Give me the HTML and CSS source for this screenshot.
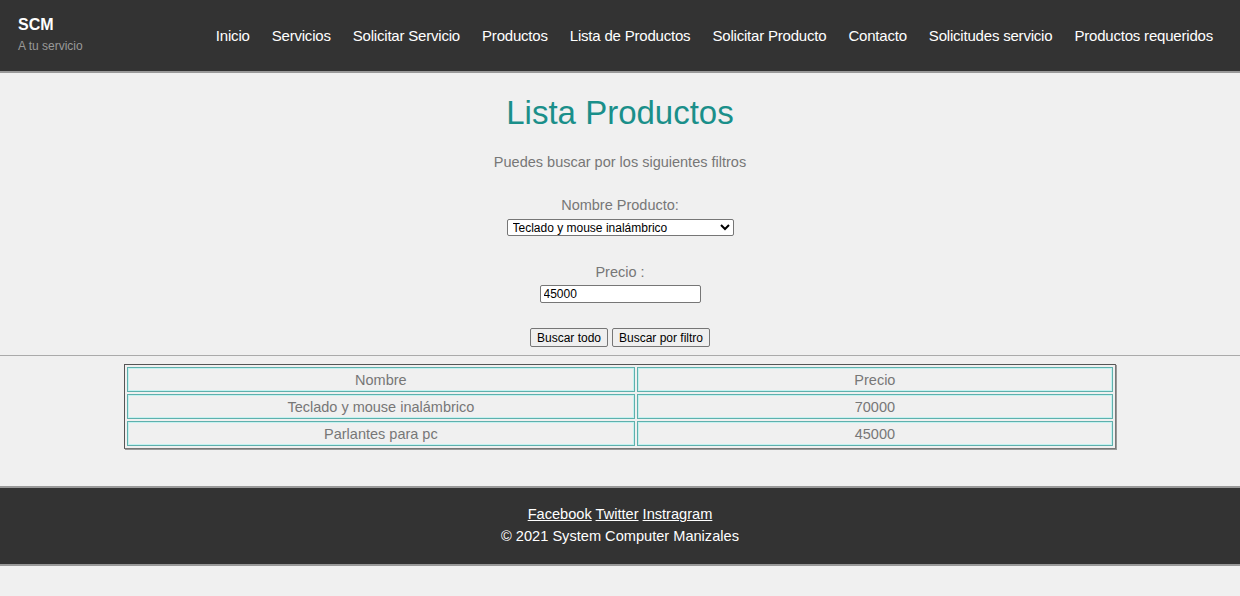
FILE: index.html
```html
<!DOCTYPE html>
<html lang="es">
<head>
<meta charset="utf-8">
<title>Lista Productos</title>
<link rel="stylesheet" href="styles.css">
</head>
<body>
<header class="topbar">
  <div class="brand">
    <div class="brand-name">SCM</div>
    <div class="brand-tag">A tu servicio</div>
  </div>
  <nav class="nav">
    <a href="#">Inicio</a>
    <a href="#">Servicios</a>
    <a href="#">Solicitar Servicio</a>
    <a href="#">Productos</a>
    <a href="#">Lista de Productos</a>
    <a href="#">Solicitar Producto</a>
    <a href="#">Contacto</a>
    <a href="#">Solicitudes servicio</a>
    <a href="#">Productos requeridos</a>
  </nav>
</header>
<main class="content">
  <h1 class="title">Lista Productos</h1>
  <p class="subtitle">Puedes buscar por los siguientes filtros</p>
  <form class="filters">
    <div class="field">
      <label class="field-label">Nombre Producto:</label>
      <select class="field-select">
        <option>Teclado y mouse inalámbrico</option>
        <option>Parlantes para pc</option>
      </select>
    </div>
    <div class="field">
      <label class="field-label">Precio :</label>
      <input class="field-input" type="text" value="45000">
    </div>
    <div class="actions">
      <button type="button" class="btn">Buscar todo</button>
      <button type="button" class="btn">Buscar por filtro</button>
    </div>
  </form>
  <hr class="divider">
  <table class="results">
    <tr><td class="col-name">Nombre</td><td class="col-price">Precio</td></tr>
    <tr><td class="col-name">Teclado y mouse inalámbrico</td><td class="col-price">70000</td></tr>
    <tr><td class="col-name">Parlantes para pc</td><td class="col-price">45000</td></tr>
  </table>
</main>
<footer class="footer">
  <div class="footer-links">
    <a href="#">Facebook</a> <a href="#">Twitter</a> <a href="#">Instragram</a>
  </div>
  <div class="footer-copy">© 2021 System Computer Manizales</div>
</footer>
</body>
</html>
```
FILE: styles.css
```css
html, body {
  margin: 0;
  padding: 0;
}
body {
  background: #f0f0f0;
  font-family: "Liberation Sans", Arial, sans-serif;
  color: #777;
}
.topbar {
  display: flex;
  justify-content: space-between;
  align-items: center;
  height: 71px;
  padding: 0 16px 0 18px;
  background: #333;
  border-bottom: 2px solid #999;
}
.brand {
  display: flex;
  flex-direction: column;
  margin-top: -2px;
}
.brand-name {
  color: #fff;
  font-weight: bold;
  font-size: 16px;
  line-height: 18px;
}
.brand-tag {
  color: #999;
  font-size: 12px;
  line-height: 16px;
  margin-top: 4px;
}
.nav {
  display: flex;
  gap: 0;
}
.nav a {
  color: #fff;
  text-decoration: none;
  font-size: 15px;
  padding: 0 11px;
  letter-spacing: -0.2px;
}
.content {
  text-align: center;
}
.title {
  margin: 0;
  padding-top: 19px;
  font-size: 33px;
  font-weight: normal;
  color: #1a8f8a;
  line-height: 42px;
}
.subtitle {
  margin: 20px 0 0;
  font-size: 14.5px;
  line-height: 16px;
}
.filters {
  margin-top: 26px;
}
.field {
  display: flex;
  flex-direction: column;
  align-items: center;
  margin-bottom: 27px;
}
.field-label {
  font-size: 14.5px;
  line-height: 18px;
  color: #777;
}
.field-select {
  width: 227px;
  height: 17px;
  margin-top: 5px;
  font-family: "Liberation Sans", Arial, sans-serif;
  font-size: 12px;
  color: #000;
  background: #fff;
  border: 1px solid #767676;
  border-radius: 2px;
  padding: 0 1px;
}
.field-input {
  box-sizing: border-box;
  width: 161px;
  height: 18px;
  margin-top: 4px;
  font-family: "Liberation Sans", Arial, sans-serif;
  font-size: 12px;
  color: #000;
  background: #fff;
  border: 1px solid #767676;
  border-radius: 2px;
  padding: 0 3px;
}
.actions {
  display: flex;
  justify-content: center;
  gap: 4px;
  margin-top: -2px;
}
.btn {
  font-family: "Liberation Sans", Arial, sans-serif;
  font-size: 12px;
  color: #000;
  background: #efefef;
  border: 1px solid #767676;
  border-radius: 2px;
  height: 19px;
  padding: 0 6px;
}
.divider {
  margin: 8px 0 0;
  border: 0;
  border-top: 1px solid #aaa;
  height: 0;
}
.results {
  width: 80%;
  margin: 8px auto 0;
  border-collapse: separate;
  border-spacing: 2px;
  border: 1px solid;
  border-color: #555 #777 #777 #555;
  box-shadow: 1px 1px 0 #999;
}
.results td {
  border: 1px solid #5fb0ad;
  box-shadow: inset 0 0 0 1px #c4f2f0;
  font-size: 14.5px;
  color: #777;
  height: 23px;
  padding: 0;
  text-align: center;
}
.results .col-name {
  width: 51.6%;
}
.footer {
  margin-top: 37px;
  background: #333;
  border-top: 2px solid #999;
  border-bottom: 2px solid #999;
  color: #fff;
  text-align: center;
  font-size: 14.6px;
  padding: 15px 0 17px;
  line-height: 22px;
}
.footer-links a {
  color: #fff;
  text-decoration: underline;
}
```
